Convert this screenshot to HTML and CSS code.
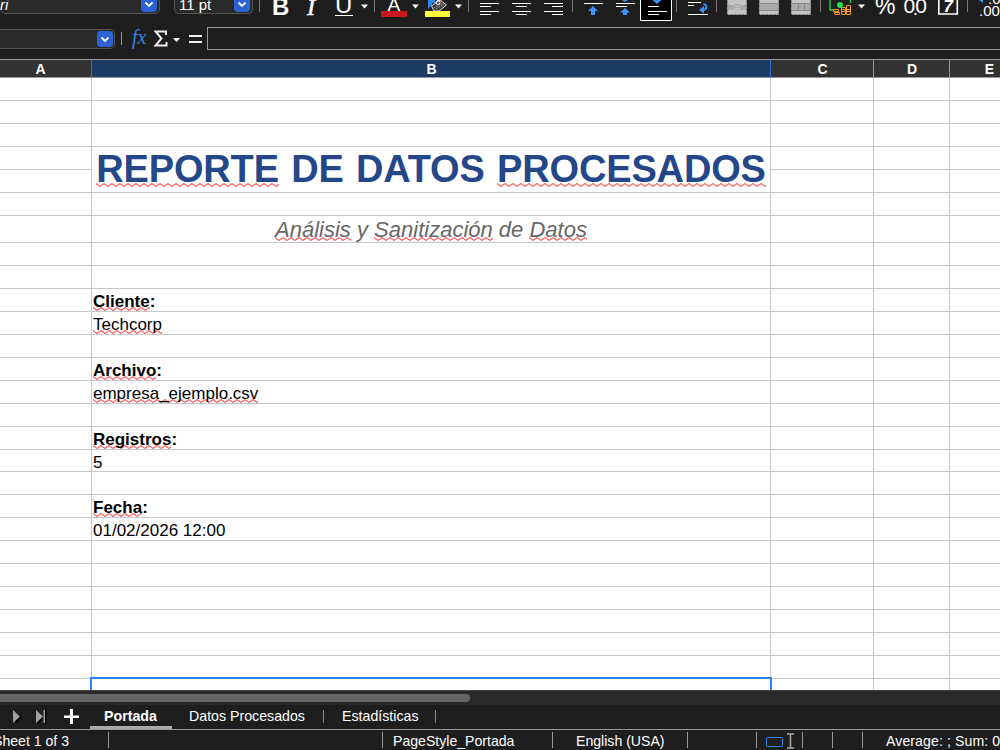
FILE: index.html
```html
<!DOCTYPE HTML>
<html lang="es">
<head>
<meta charset="utf-8" />
<title>Reporte de datos procesados</title>
<link rel="stylesheet" href="styles.css">
</head>

<body>
<div class="toolbar">
	<div class="select font-name"><i>ri</i><span class="drop"><svg width="16" height="16"><path d="M4.5 6.5L8 10l3.5-3.5" /></svg></span></div>
	<div class="select font-size"><span>11 pt</span><span class="drop"><svg width="16" height="16"><path d="M4.5 6.5L8 10l3.5-3.5" /></svg></span></div>
	<span class="sep wide"></span>
	<svg class="btn" viewBox="0 0 32 24"><text x="7" y="15" class="glyph bold">B</text></svg>
	<svg class="btn" viewBox="0 0 32 24"><text x="10" y="15" class="glyph italic">I</text></svg>
	<svg class="btn narrow" viewBox="0 0 30 24"><text x="6" y="13" class="glyph under">U</text><path class="line" d="M6 15.5h18" /></svg>
	<svg class="arrow" viewBox="0 0 11 24"><path d="M2 4.500h7L5.500 8.500z" /></svg>
	<span class="sep"></span>
	<svg class="btn" viewBox="0 0 32 24"><text x="9.500" y="11" class="glyph letter">A</text><path fill="#c9151e" d="M3 11h26v6H3z" /></svg>
	<svg class="arrow" viewBox="0 0 11 24"><path d="M2 4.500h7L5.500 8.500z" /></svg>
	<svg class="btn" viewBox="0 0 32 24">
		<path fill="#2f88f0" d="M7 0h7v3h-3v2l-4 4z" />
		<path fill="#3a3a3a" stroke="#ddd" d="M10.500 6L19 0l6.500 5L18 11h-5z" />
		<circle cx="17" cy="2.500" r="2" fill="none" stroke="#fff" />
		<path fill="none" stroke="#bbb" stroke-dasharray="1 1" d="M13 8l9-5M15 9l8-5" />
		<path fill="#ffff38" d="M4 11h25v6H4z" />
	</svg>
	<svg class="arrow" viewBox="0 0 11 24"><path d="M2 4.500h7L5.500 8.500z" /></svg>
	<span class="sep"></span>
	<svg class="btn" viewBox="0 0 32 24"><path class="line" d="M8 3.500h19M8 6.500h11M8 11.500h19M8 14.500h11" /></svg>
	<svg class="btn" viewBox="0 0 32 24"><path class="line" d="M8 3.500h19M12 6.500h11M8 11.500h19M12 14.500h11" /></svg>
	<svg class="btn" viewBox="0 0 32 24"><path class="line" d="M8 3.500h19M16 6.500h11M8 11.500h19M16 14.500h11" /></svg>
	<span class="sep"></span>
	<svg class="btn" viewBox="0 0 32 24"><path class="line" d="M8 3.500h19" /><path class="blue" d="M17 6l5 5h-3v4h-4v-4h-3z" /></svg>
	<svg class="btn" viewBox="0 0 32 24"><path class="line" d="M8 3.500h19M8 6.500h11" /><path class="blue" d="M14 0h6l-3 2zM17 8l5 4.500h-3V15h-4v-2.500h-3z" /></svg>
	<svg class="btn" viewBox="0 0 32 24"><path fill="#000" stroke="#fff" d="M.5-2h31v22.500H.5z" /><path class="line" d="M8 6.500h11M8 11.500h19M8 14.500h11" /><path class="blue" d="M12.500 0h9L17 4z" /></svg>
	<span class="sep"></span>
	<svg class="btn" viewBox="0 0 32 24"><path class="line" d="M8 2.500h13M8 5.500h6M8 14.500h20" /><path fill="none" stroke="#2f88f0" stroke-width="2" d="M23.500 4c4 1 4 5-1 6.500" /><path class="blue" d="M19 10l5-4v7.500z" /></svg>
	<span class="sep"></span>
	<svg class="btn" viewBox="0 0 32 24"><path class="cell" d="M7.500-3h19v17.500h-19z" /><path fill="#aaa" d="M8 4h18v6H8z" /><path class="detail light" d="M9 4.500h4l3 2h2l3-2h4M9 10.500h4l3-2h2l3 2h4" /></svg>
	<svg class="btn" viewBox="0 0 32 24"><path class="cell" d="M7.500-3h19v17.500h-19z" /><path fill="#aaa" d="M8 4h18v6H8z" /><path class="detail" d="M8 3.500h18M8 10.500h18" /></svg>
	<svg class="btn" viewBox="0 0 32 24"><path class="cell" d="M7.500-3h19v17.500h-19z" /><path fill="#aaa" d="M8 4h18v6H8z" /><path class="detail" d="M8 3.500h18M8 10.500h18M14.500 4v6M20.500 4v6" /></svg>
	<span class="sep"></span>
	<svg class="btn" viewBox="0 0 32 24">
		<path fill="none" stroke="#27c04a" stroke-width="1.500" d="M6 0v10h5M26.500 0v3" />
		<circle cx="16" cy="5" r="3" fill="#1fe052" />
		<path fill="#1e1e1e" stroke="#f39a1c" d="M9.500 9.500h5v2h-5zM10.500 12.500h5v2h-5zM17.500 7.500h4v7h-4zM22.500 5.500h4v9h-4zM17 9.500h9M17 11.500h9" />
	</svg>
	<svg class="arrow" viewBox="0 0 11 24"><path d="M2 4.500h7L5.500 8.500z" /></svg>
	<svg class="btn" viewBox="0 0 32 24"><text x="8" y="14" class="glyph pct">%</text></svg>
	<svg class="btn" viewBox="0 0 32 24"><text x="4.500" y="13" class="glyph num">00</text><path fill="#fff" d="M15.500 13h2v2h-2z" /></svg>
	<svg class="btn" viewBox="0 0 32 24"><path fill="none" stroke="#fff" stroke-width="1.600" d="M7.800-3h18.500v17H7.800z" /><text x="12.500" y="11.500" class="glyph date">7</text></svg>
	<span class="sep"></span>
	<svg class="btn" viewBox="0 0 32 24"><path class="blue" d="M8 0h4v3z" /><text x="17" y="3.500" class="glyph dec">.0</text><text x="8" y="16" class="glyph dec">.00</text></svg>
</div>

<div class="formula-bar">
	<div class="name-box"><span class="drop"><svg width="16" height="16"><path d="M4.500 6.500L8 10l3.500-3.500" /></svg></span></div>
	<span class="divider"></span>
	<span class="fx">fx</span>
	<svg class="sigma" width="14" height="17" viewBox="0 0 14 17"><path d="M12 5V1.500H1.500L7.500 8.500 1.500 15.500H12.500V12" /></svg>
	<svg class="arrow" viewBox="0 0 11 24"><path d="M2 11h7l-3.500 4z" /></svg>
	<svg class="equal" width="13" height="10" viewBox="0 0 13 10"><path d="M0 2h13M0 8h13" /></svg>
	<div class="formula"></div>
</div>

<div class="sheet">
	<div class="col col-a"><div class="head">A</div><div class="cells"></div></div>
	<div class="col col-b">
		<div class="head">B</div>
		<div class="row"></div>
		<div class="row"></div>
		<div class="row"></div>
		<div class="row title"><div><u>REPORTE</u> DE DATOS <u>PROCESADOS</u></div></div>
		<div class="row"></div>
		<div class="row subtitle"><div><u>Análisis</u> y <u>Sanitización</u> de <u>Datos</u></div></div>
		<div class="row"></div>
		<div class="row"></div>
		<div class="row label"><u>Cliente</u>:</div>
		<div class="row"><u>Techcorp</u></div>
		<div class="row"></div>
		<div class="row label"><u>Archivo</u>:</div>
		<div class="row"><u>empresa_ejemplo.csv</u></div>
		<div class="row"></div>
		<div class="row label"><u>Registros</u>:</div>
		<div class="row short">5</div>
		<div class="row"></div>
		<div class="row label"><u>Fecha</u>:</div>
		<div class="row">01/02/2026 12:00</div>
		<div class="row"></div>
		<div class="row"></div>
		<div class="row"></div>
		<div class="row"></div>
		<div class="row"></div>
		<div class="row"></div>
		<div class="cursor"></div>
	</div>
	<div class="col col-c"><div class="head">C</div><div class="cells"></div></div>
	<div class="col col-d"><div class="head">D</div><div class="cells"></div></div>
	<div class="col col-e"><div class="head">E</div><div class="cells"></div></div>
</div>

<div class="scrollbar"><div class="thumb"></div></div>

<div class="tabs">
	<svg class="nav" width="90" height="24" viewBox="0 0 90 24">
		<path fill="#000" d="M14 6l8 6.500-7 6.500zM37 6l8 6.500-7 6.500zM45 5h1.500v14H45z" />
		<path fill="#a0a0a0" d="M13 5l7 6.500-7 6.500zM36 5l7 6.500-7 6.500zM43.500 5h1.500v13h-1.500z" />
		<path fill="#fff" d="M64 10.500h6V4h3v6.500h6v2.500h-6v6h-3v-6h-6z" />
	</svg>
	<div class="tab active">Portada</div>
	<div class="tab data">Datos Procesados</div>
	<div class="tab stats">Estadísticas</div>
</div>

<div class="status">
	<div class="item pages"><span>Sheet 1 of 3</span></div>
	<div class="item search"></div>
	<div class="item style">PageStyle_Portada</div>
	<div class="item lang">English (USA)</div>
	<div class="item insert"></div>
	<div class="item mode">
		<svg width="44" height="20" viewBox="0 0 44 20"><rect x="9.500" y="7.500" width="16" height="9" rx="1" fill="none" stroke="#3584e4" /><path fill="none" stroke="#aaa" stroke-width="1.500" d="M30 4h7M33.500 4v14M30 18h7" /></svg>
	</div>
	<div class="item small"></div>
	<div class="item small"></div>
	<div class="sum">Average: ; Sum: 0</div>
</div>
</body>
</html>
```
FILE: styles.css
```css
* { box-sizing: border-box; }
body {
	display: flex;
	flex-direction: column;
	width: 1000px;
	height: 750px;
	margin: 0;
	overflow: hidden;
	background: #1e1e1e;
	color: #fff;
	font-family: "Liberation Sans", Arial, sans-serif;
}
svg { display: block; flex: none; }

/* toolbar */
.toolbar { display: flex; height: 27px; overflow: hidden; }
	.toolbar .btn { width: 32px; height: 24px; }
	.toolbar .narrow { width: 30px; }
.arrow { width: 11px; height: 24px; fill: #fff; }
.select {
	display: flex;
	flex: none;
	justify-content: space-between;
	height: 14px;
	padding-right: 2px;
	border: 1px solid #555;
	border-top: 0;
	border-radius: 0 0 5px 5px;
	background: #2a2a2a;
	font-size: 15px;
	line-height: 9px;
}
	.select .drop { margin-top: -4px; }
.font-name { width: 160px; margin-right: 14px; border-left: 0; }
.font-size { width: 79px; padding-left: 4px; }
.drop { width: 16px; height: 16px; border-radius: 4px; background: #2b62d6; }
	.drop path { fill: none; stroke: #fff; stroke-width: 1.8; }
.sep { flex: none; width: 8px; height: 12px; background: linear-gradient(#777, #777) 4px 0 / 1px 12px no-repeat; }
.sep.wide { width: 12px; background-position: 6px 0; }
.line { stroke: #fff; }
.blue { fill: #3b92fb; }
.cell { fill: #c4c4c4; stroke: #999; stroke-dasharray: 3 1; }
.detail { fill: none; stroke: #888; }
	.detail.light { stroke: #ccc; }
.glyph { fill: #fff; font-size: 23px; }
	.bold { font-size: 24px; font-weight: bold; }
	.italic { font: italic 24px "Liberation Serif", serif; stroke: #fff; stroke-width: .5; }
	.under { font-size: 24px; }
	.letter { font-size: 19px; }
	.pct { font-size: 23px; }
	.num { font-size: 21px; }
	.date { font-size: 17px; font-style: italic; font-weight: bold; }
	.dec { font-size: 15px; }

/* formula bar */
.formula-bar { display: flex; align-items: center; height: 23px; margin-bottom: 9px; }
.name-box {
	display: flex;
	justify-content: flex-end;
	width: 115px;
	height: 20px;
	padding: 1px;
	border: 1px solid #555;
	border-left: 0;
	border-radius: 0 5px 5px 0;
	background: #2a2a2a;
}
.divider { width: 1px; height: 13px; margin: 0 10px 0 6px; background: #999; }
.fx { width: 22px; padding-bottom: 3px; color: #3584e4; font: italic 20px/20px "Liberation Serif", serif; }
.sigma path { fill: none; stroke: #eee; stroke-width: 2; }
.formula-bar .arrow { margin: 0 7px 0 3px; }
.equal path { stroke: #eee; stroke-width: 2; }
.formula { flex: 1; height: 23px; margin-left: 5px; border: 1px solid #999; border-right: 0; }

/* sheet */
.sheet { display: flex; height: 631px; overflow: hidden; background: #fff; color: #000; }
.col { flex: none; }
	.col-a { width: 92px; }
	.col-b { width: 679px; }
	.col-c { width: 103px; }
	.col-d { width: 76px; }
	.col-e { width: 79px; }
.head {
	height: 19px;
	padding-left: 1px;
	border: 1px solid #999;
	border-left: 0;
	background: #333;
	color: #fff;
	font-size: 14px;
	font-weight: bold;
	line-height: 18px;
	text-align: center;
}
	.col-a .head { padding-right: 11px; border-right-color: #2a6fd6; }
	.col-b .head { border-right-color: #2a6fd6; background: #1c3c66; }
.cells {
	height: 612px;
	border-right: 1px solid #c8c8c8;
	background:
		linear-gradient(#c8c8c8, #c8c8c8) 0 164px / 100% 1px no-repeat,
		linear-gradient(#c8c8c8, #c8c8c8) 0 393px / 100% 1px no-repeat,
		repeating-linear-gradient(transparent 0 22px, #c8c8c8 22px 23px) 0 0 / 100% 138px no-repeat,
		repeating-linear-gradient(transparent 0 22px, #c8c8c8 22px 23px) 0 165px / 100% 207px no-repeat,
		repeating-linear-gradient(transparent 0 22px, #c8c8c8 22px 23px) 0 394px no-repeat;
}
.row {
	height: 23px;
	padding-left: 1px;
	border-right: 1px solid #c8c8c8;
	border-bottom: 1px solid #c8c8c8;
	font-size: 17px;
	line-height: 25px;
	white-space: pre;
}
.row u {
	display: inline-block;
	height: 22px;
	vertical-align: top;
	text-decoration: none;
	background: url("data:image/svg+xml,%3Csvg xmlns='http://www.w3.org/2000/svg' width='8' height='4'%3E%3Cpath d='M-1 1.300L0 .6 4 3.400 8 .6 9 1.300' fill='none' stroke='%23ff5555' stroke-width='1.200'/%3E%3C/svg%3E") 0 100% repeat-x;
}
.row.short { height: 22px; }
.label { font-weight: bold; }
.title, .subtitle { display: flex; justify-content: center; padding: 0; }
.title {
	height: 46px;
	color: #24478a;
	font-size: 38px;
	font-weight: bold;
	line-height: 45px;
	letter-spacing: -.15px;
	word-spacing: 1.9px;
}
	.title u { height: 40px; }
.subtitle { height: 27px; color: #666; font-size: 22px; font-style: italic; line-height: 28px; }
	.subtitle u { height: 25px; }
.cursor {
	position: relative;
	width: 682px;
	height: 20px;
	margin: -2px 0 0 -2px;
	border: 2px solid #2a7fff;
	border-bottom: 0;
	background: #fff;
}

/* bottom bars */
.scrollbar { height: 15px; padding-top: 3px; border-top: 1px solid #444; background: #2a2a2a; }
	.scrollbar .thumb { width: 470px; height: 8px; border-radius: 0 4px 4px 0; background: #666; }
.tabs { display: flex; height: 25px; border-bottom: 1px solid #999; font-size: 14.2px; }
.tab { position: relative; height: 24px; line-height: 23px; white-space: nowrap; }
	.tab::after { content: ""; position: absolute; top: 5px; right: 0; width: 1px; height: 13px; background: #888; }
.tab.active { width: 82px; padding-left: 14px; border-bottom: 3px solid #aaa; font-weight: bold; }
	.tab.active::after { display: none; }
.tab.data { width: 135px; margin-left: 17px; }
.tab.stats { width: 94px; margin-left: 18px; }
.status { display: flex; height: 20px; font-size: 14.1px; line-height: 22px; white-space: nowrap; }
.status .item { flex: none; background: linear-gradient(#999, #999) 100% 2px / 1px 16px no-repeat; }
	.status .pages { width: 109px; }
	.pages span { margin-left: -7px; }
	.status .search { width: 274px; }
	.status .style { width: 170px; padding-left: 10px; }
	.status .lang { width: 135px; padding-left: 23px; }
	.status .insert { width: 69px; }
	.status .mode { width: 46px; }
	.status .small { width: 30px; }
.sum { margin-left: 23px; letter-spacing: .1px; }
```
